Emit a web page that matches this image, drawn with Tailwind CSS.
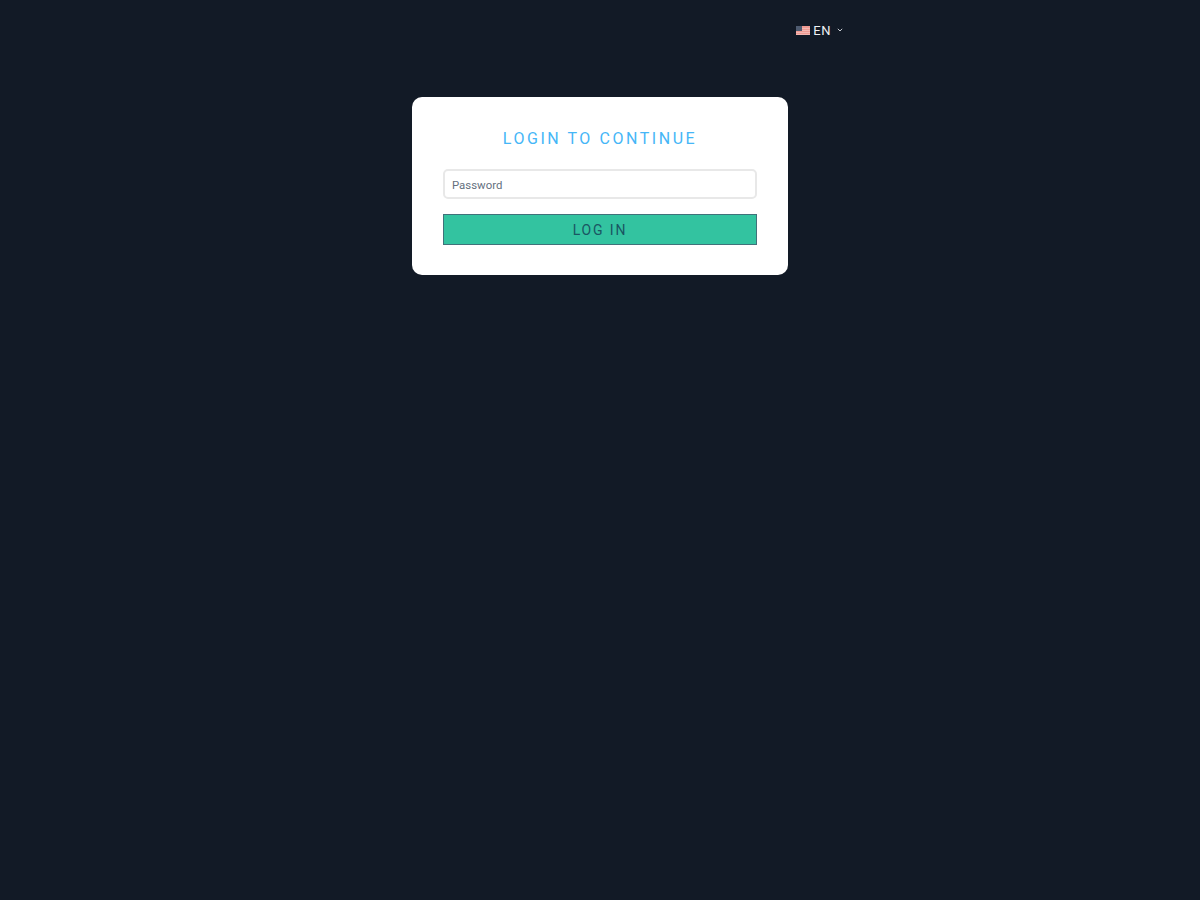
<!DOCTYPE html>
<html lang="en">
<head>
<meta charset="utf-8">
<title>Login</title>
<script src="https://cdn.jsdelivr.net/npm/@tailwindcss/browser@4"></script>
</head>
<body class="m-0 min-h-[900px] bg-[#121a26] font-['Roboto',sans-serif]">
  <div class="mx-auto flex h-[97px] w-[486px] items-start justify-end pt-[23px]">
    <button class="flex h-4 items-center text-[13px] leading-4 tracking-[0.5px] text-[#eef1f4]">
      <svg class="mr-[3px] mb-[2px] block" width="14" height="9" viewBox="0 0 14 9"><rect width="14" height="9" fill="#ef9a92"/><rect y="2" width="14" height="1" fill="#f4b7b1"/><rect y="4" width="14" height="1" fill="#f4b7b1"/><rect y="6" width="14" height="1" fill="#f4b7b1"/><rect y="8" width="14" height="1" fill="#f4b7b1"/><rect width="6" height="5" fill="#4e5b70"/></svg>
      <span>EN</span>
      <svg class="ml-[6px] mb-[2px] block" width="6" height="4" viewBox="0 0 6 4" fill="none" stroke="#c8ccd2" stroke-width="1"><path d="M0.8 0.8 3 3 5.2 0.8"/></svg>
    </button>
  </div>
  <main class="mx-auto box-border h-[178px] w-[376px] rounded-[10px] bg-white px-[31px] pt-[32px]">
    <h1 class="m-0 text-center text-[16px] font-normal leading-5 tracking-[2.55px] text-[#45b6f7]">LOGIN TO CONTINUE</h1>
    <input type="password" placeholder="Password" class="mt-[20px] box-border block h-[30px] w-full rounded-[5px] border-2 border-[#e8e8e8] bg-white pt-[2px] pl-[7px] text-[11.4px] text-[#5f6f80] outline-none placeholder:text-[#64707e]">
    <button class="mt-[15px] box-border block h-[31px] w-full border border-[#40727a] bg-[#33c3a0] pt-[2px] text-[14px] font-normal tracking-[1.85px] text-[#1a5663]">LOG IN</button>
  </main>
</body>
</html>
